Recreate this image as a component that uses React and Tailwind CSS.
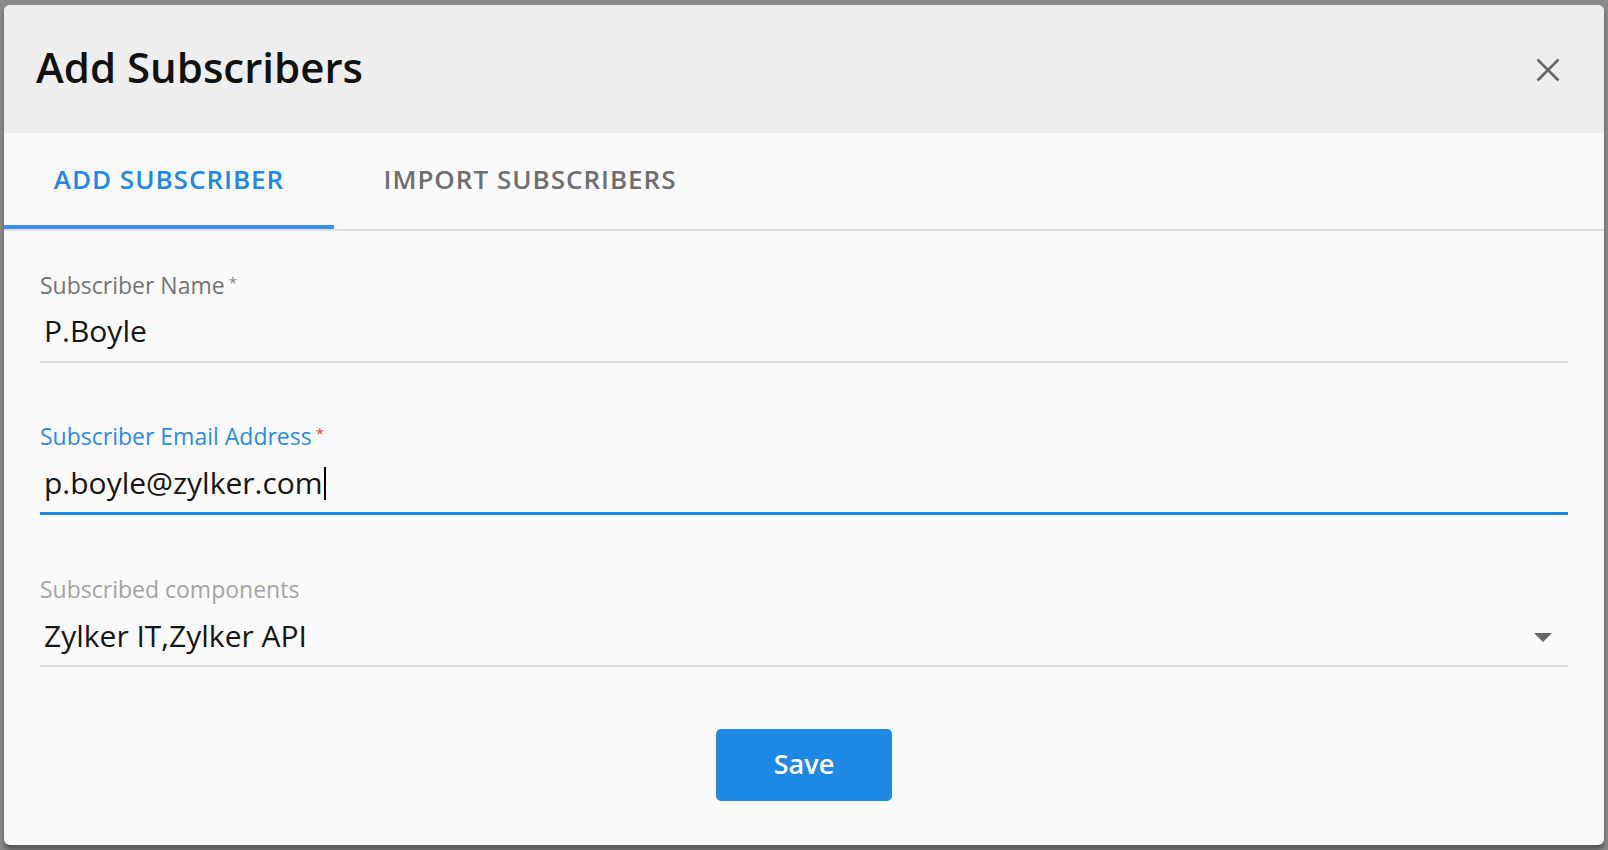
import React from 'react'

const FONT = { fontFamily: '"Open Sans", "Liberation Sans", sans-serif' }

function CloseIcon() {
  return (
    <svg width="24" height="24" viewBox="0 0 24 24" fill="none">
      <path d="M1.5 1.5 L22.5 22.5 M22.5 1.5 L1.5 22.5" stroke="#666" strokeWidth="2.6" />
    </svg>
  )
}

function Caret() {
  return (
    <svg width="18" height="9" viewBox="0 0 18 9">
      <path d="M0 0 H18 L9 9 Z" fill="#666" />
    </svg>
  )
}

function Field({ label, labelClass, star, starClass, value, focused, caret, className = '', rowClass = '' }) {
  return (
    <div className={className}>
      <div className={`h-[28px] leading-[28px] text-[23px] ${labelClass}`}>
        {label}
        {star && <span className={`relative -top-[6px] ml-[4px] text-[15px] ${starClass}`}>*</span>}
      </div>
      <div
        className={`flex items-center ${rowClass} ${
          focused ? 'border-b-[3px] border-[#1e88e5]' : 'border-b-2 border-[#dcdcdc]'
        }`}
      >
        <div className="h-[40px] leading-[40px] text-[30px] text-[#151515] pl-[4px] flex-1 flex items-center">
          {value}
          {focused && <span className="ml-[1px] inline-block w-[2px] h-[33px] bg-black" />}
        </div>
        {caret && (
          <div className="pr-[16px] pt-[2px]">
            <Caret />
          </div>
        )}
      </div>
    </div>
  )
}

export default function App() {
  return (
    <div className="w-full h-[850px] bg-[#898989] px-[4px] py-[5px]" style={FONT}>
      <div className="h-[840px] w-[1600px] rounded-[6px] overflow-hidden bg-[#fafafa] flex flex-col shadow-[0_5px_4px_rgba(0,0,0,0.35)]">
        {/* Header */}
        <div className="h-[128px] shrink-0 bg-[#eeeeee] flex items-center justify-between pl-[32px] pr-[44px]">
          <h1 className="text-[42px] font-semibold text-[#111] leading-none mb-[4px]">Add Subscribers</h1>
          <button className="w-[24px] h-[24px] flex items-center justify-center mt-[2px]">
            <CloseIcon />
          </button>
        </div>

        {/* Tabs */}
        <div className="flex border-b-2 border-[#dddddd] h-[98px] shrink-0">
          <div className="w-[330px] flex items-center justify-center border-b-4 border-[#3d8bf0] text-[26px] font-semibold tracking-[1px] text-[#2088e4] pt-[1px]">
            ADD SUBSCRIBER
          </div>
          <div className="w-[392px] flex items-center justify-center border-b-4 border-transparent text-[26px] font-semibold tracking-[1px] text-[#6e6e6e] pt-[1px]">
            IMPORT SUBSCRIBERS
          </div>
        </div>

        {/* Form */}
        <div className="px-[36px] pt-[40px] flex flex-col">
          <Field
            rowClass="mt-[12px] pb-[10px]"
            label="Subscriber Name"
            labelClass="text-[#737373]"
            star
            starClass="text-[#8a8a8a]"
            value="P.Boyle"
          />
          <Field
            className="mt-[59px]"
            rowClass="mt-[13px] pb-[9px]"
            label="Subscriber Email Address"
            labelClass="text-[#2a8be4]"
            star
            starClass="text-[#e53935]"
            value="p.boyle@zylker.com"
            focused
          />
          <Field
            className="mt-[60px]"
            rowClass="mt-[13px] pb-[9px]"
            label="Subscribed components"
            labelClass="text-[#a3a3a3]"
            value="Zylker IT,Zylker API"
            caret
          />
          <div className="flex justify-center mt-[62px]">
            <button className="w-[176px] h-[72px] rounded-[5px] bg-[#1e88e5] text-white text-[27px] font-semibold pb-[1px]">
              Save
            </button>
          </div>
        </div>
      </div>
    </div>
  )
}
